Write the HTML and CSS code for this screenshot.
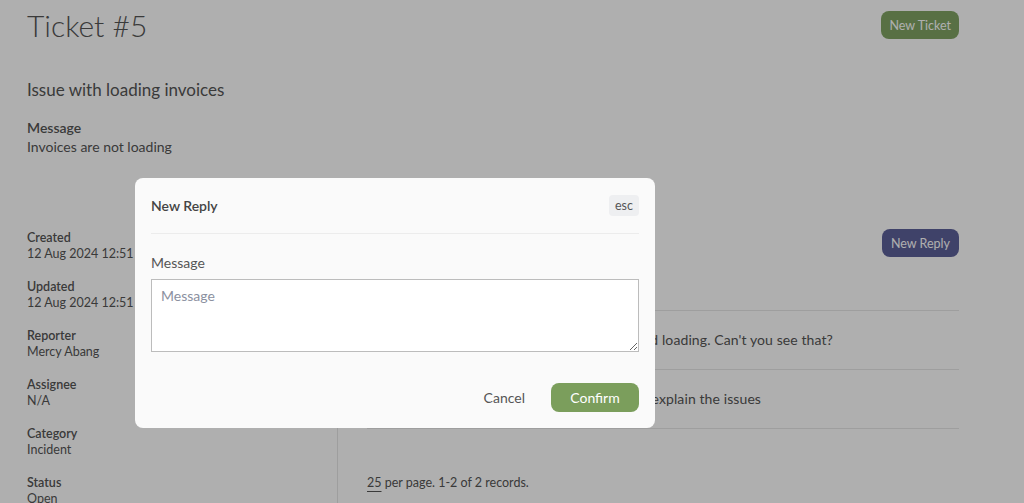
FILE: index.html
```html
<!DOCTYPE html>
<html lang="en">
<head>
  <meta charset="UTF-8">
  <title>Ticket #5</title>
  <link rel="stylesheet" href="styles.css">
</head>
<body>
  <div class="page">
    <div class="header">
      <h1>Ticket #5</h1>
      <button class="btn btn-green">New Ticket</button>
    </div>

    <h2 class="subject">Issue with loading invoices</h2>
    <div class="message">
      <div class="message-label">Message</div>
      <div class="message-text">Invoices are not loading</div>
    </div>

    <div class="details">
      <div class="sidebar">
        <div class="item"><div class="label">Created</div><div class="value">12 Aug 2024 12:51</div></div>
        <div class="item"><div class="label">Updated</div><div class="value">12 Aug 2024 12:51</div></div>
        <div class="item"><div class="label">Reporter</div><div class="value">Mercy Abang</div></div>
        <div class="item"><div class="label">Assignee</div><div class="value">N/A</div></div>
        <div class="item"><div class="label">Category</div><div class="value">Incident</div></div>
        <div class="item"><div class="label">Status</div><div class="value">Open</div></div>
      </div>
      <div class="replies">
        <div class="replies-head">
          <button class="btn btn-blue">New Reply</button>
        </div>
        <div class="reply-list">
          <div class="reply">Mercy Abang: Hi, the invoice page has stopped loading. Can't you see that?</div>
          <div class="reply">Thanks for the report. Can you please further explain the issues</div>
        </div>
        <div class="pager"><span class="per-page">25</span> per page. 1-2 of 2 records.</div>
      </div>
    </div>
  </div>

  <div class="overlay">
    <div class="modal">
      <div class="modal-head">
        <span class="modal-title">New Reply</span>
        <span class="esc">esc</span>
      </div>
      <label class="field-label">Message</label>
      <textarea class="field" placeholder="Message"></textarea>
      <div class="modal-foot">
        <button class="btn-cancel">Cancel</button>
        <button class="btn btn-confirm">Confirm</button>
      </div>
    </div>
  </div>
</body>
</html>
```

FILE: styles.css
```css
body {
  margin: 0;
  font-family: 'Lato', 'Noto Sans', sans-serif;
  color: #555;
  background: #fff;
}
.page {
  width: 932px;
  padding-left: 27px;
}
.header {
  display: flex;
  justify-content: space-between;
  align-items: flex-start;
  padding-top: 4px;
}
h1 {
  margin: 0;
  font-size: 30px;
  font-weight: 300;
  line-height: 42px;
  color: #555;
}
.btn {
  border: none;
  border-radius: 8px;
  color: #fff;
  font-family: inherit;
  font-size: 12.5px;
  padding: 0 9px;
  height: 28px;
  cursor: pointer;
}
.header .btn {
  margin-top: 7px;
  padding: 0 8px;
}
.btn-green {
  background-color: #80a463;
}
.btn-blue {
  background-color: #5d6099;
}
.subject {
  margin: 32px 0 0;
  font-size: 17px;
  font-weight: 400;
  line-height: 24px;
}
.message {
  margin-top: 16px;
  font-size: 14px;
  line-height: 19px;
}
.message-label {
  font-weight: 600;
}
.details {
  display: flex;
  margin-top: 69px;
}
.sidebar {
  width: 310px;
  padding-top: 5px;
}
.item {
  margin-bottom: 17px;
  font-size: 12.5px;
  line-height: 16px;
}
.label {
  font-weight: 600;
}
.replies {
  flex: 1;
  border-left: 1px solid #e6e6e6;
  padding-left: 29px;
}
.replies-head {
  display: flex;
  justify-content: flex-end;
  padding-top: 4px;
  height: 81px;
}
.reply-list {
  border-top: 1px solid #e6e6e6;
}
.reply {
  height: 58px;
  line-height: 58px;
  border-bottom: 1px solid #e6e6e6;
  font-size: 14px;
  letter-spacing: 0.1px;
  white-space: nowrap;
}
.pager {
  margin-top: 46px;
  font-size: 12.5px;
}
.per-page {
  text-decoration: underline;
  text-underline-offset: 4px;
}
.overlay {
  position: fixed;
  inset: 0;
  background: rgba(0, 0, 0, 0.314);
}
.modal {
  position: absolute;
  left: 135px;
  top: 178px;
  width: 520px;
  height: 250px;
  box-sizing: border-box;
  padding: 0 16px;
  background: #fafafa;
  border-radius: 8px;
}
.modal-head {
  display: flex;
  justify-content: space-between;
  align-items: center;
  height: 55px;
  border-bottom: 1px solid #ececec;
}
.modal-title {
  font-size: 14px;
  font-weight: 600;
  color: #444;
}
.esc {
  background: #eeeff1;
  border-radius: 4px;
  font-size: 12.5px;
  line-height: 15px;
  padding: 3px 6px;
  color: #555;
}
.field-label {
  display: block;
  margin-top: 20px;
  font-size: 14px;
  line-height: 18px;
  color: #555;
}
.field {
  display: block;
  width: 100%;
  box-sizing: border-box;
  height: 73px;
  margin-top: 7px;
  border: 1px solid #bcbcbc;
  padding: 7px 9px;
  font-family: inherit;
  font-size: 14px;
  background: #fff;
}
.field::placeholder {
  color: #8b90a0;
}
.modal-foot {
  display: flex;
  justify-content: flex-end;
  align-items: center;
  gap: 26px;
  margin-top: 31px;
}
.btn-cancel {
  background: none;
  border: none;
  padding: 0;
  font-family: inherit;
  font-size: 14px;
  color: #555;
}
.btn-confirm {
  background-color: #7b9e5c;
  font-size: 14px;
  width: 88px;
  height: 29px;
}
```
